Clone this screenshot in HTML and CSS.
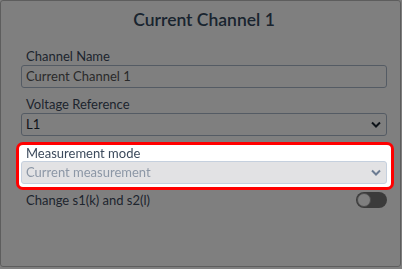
FILE: index.html
```html
<!DOCTYPE html>
<html>
<head>
<meta charset="utf-8">
<title>Current Channel 1</title>
<link rel="stylesheet" href="styles.css">
</head>
<body>
<div class="modal">
	<h2 class="modal-title">Current Channel 1</h2>
	<div class="field">
		<label class="field-label">Channel Name</label>
		<div class="input">Current Channel 1</div>
	</div>
	<div class="field">
		<label class="field-label">Voltage Reference</label>
		<div class="input select">L1
			<svg class="chevron" width="10" height="7" viewBox="0 0 10 7"><path d="M1 1.5 L5 5.5 L9 1.5" fill="none" stroke="currentColor" stroke-width="2"/></svg>
		</div>
	</div>
	<div class="field field-highlight">
		<label class="field-label">Measurement mode</label>
		<div class="input select disabled">Current measurement
			<svg class="chevron" width="10" height="7" viewBox="0 0 10 7"><path d="M1 1.5 L5 5.5 L9 1.5" fill="none" stroke="currentColor" stroke-width="2"/></svg>
		</div>
	</div>
	<div class="switch-row">
		<span class="field-label">Change s1(k) and s2(l)</span>
		<span class="switch"><span class="knob"></span></span>
	</div>
	<div class="backdrop"></div>
</div>
</body>
</html>
```

FILE: styles.css
```css
body{
	margin:0;
	background:#fff;
	font-family:"Source Sans Pro", Lato, "Open Sans", sans-serif;
	color:#2c3e50;
}

.modal{
	position:relative;
	box-sizing:border-box;
	width:401px;
	height:267px;
	border:1px solid #bbb;
	border-radius:3px;
	background:#fff;
	padding:8px 13px 0 20px;
}

.modal-title{
	margin:0 0 17px 0;
	text-align:center;
	font-size:17.5px;
	font-weight:600;
	line-height:22px;
	color:#34495e;
}

.field{
	margin-bottom:8px;
}

.field-label{
	display:block;
	padding-left:5px;
	font-size:13px;
	line-height:16px;
	color:#3c4a5c;
}

.input{
	box-sizing:border-box;
	height:23px;
	margin-top:1px;
	border:1px solid #a9b7c9;
	border-radius:3px;
	padding:0 4px;
	font-size:13px;
	line-height:21px;
	color:#555;
	background:#fff;
}

.select{
	display:flex;
	justify-content:space-between;
	align-items:center;
	color:#1d2733;
}

.chevron{
	color:#1d2733;
	margin-right:1px;
}

.disabled{
	background:#e2e2e4;
	border-color:#c5d0de;
	color:#8c97a6;
}

.disabled .chevron{
	color:#6b7b92;
}

.field-highlight{
	position:relative;
	z-index:2;
	margin:-2px -7px 2px -5px;
	padding:0 4px 3px 2px;
	border:3px solid #f00;
	border-radius:7px;
	background:#fff;
}

.field-highlight .input{
	margin-top:0;
}

.switch-row{
	display:flex;
	justify-content:space-between;
	align-items:center;
	height:16px;
}

.switch{
	position:relative;
	width:31px;
	height:16px;
	border-radius:8px;
	background:#777;
}

.knob{
	position:absolute;
	left:1px;
	top:1px;
	width:12px;
	height:12px;
	border:1px solid #999;
	border-radius:50%;
	background:#fff;
}

.backdrop{
	position:fixed;
	left:0;
	top:0;
	right:0;
	bottom:0;
	z-index:1;
	background:rgba(0,0,0,0.5);
}
```
